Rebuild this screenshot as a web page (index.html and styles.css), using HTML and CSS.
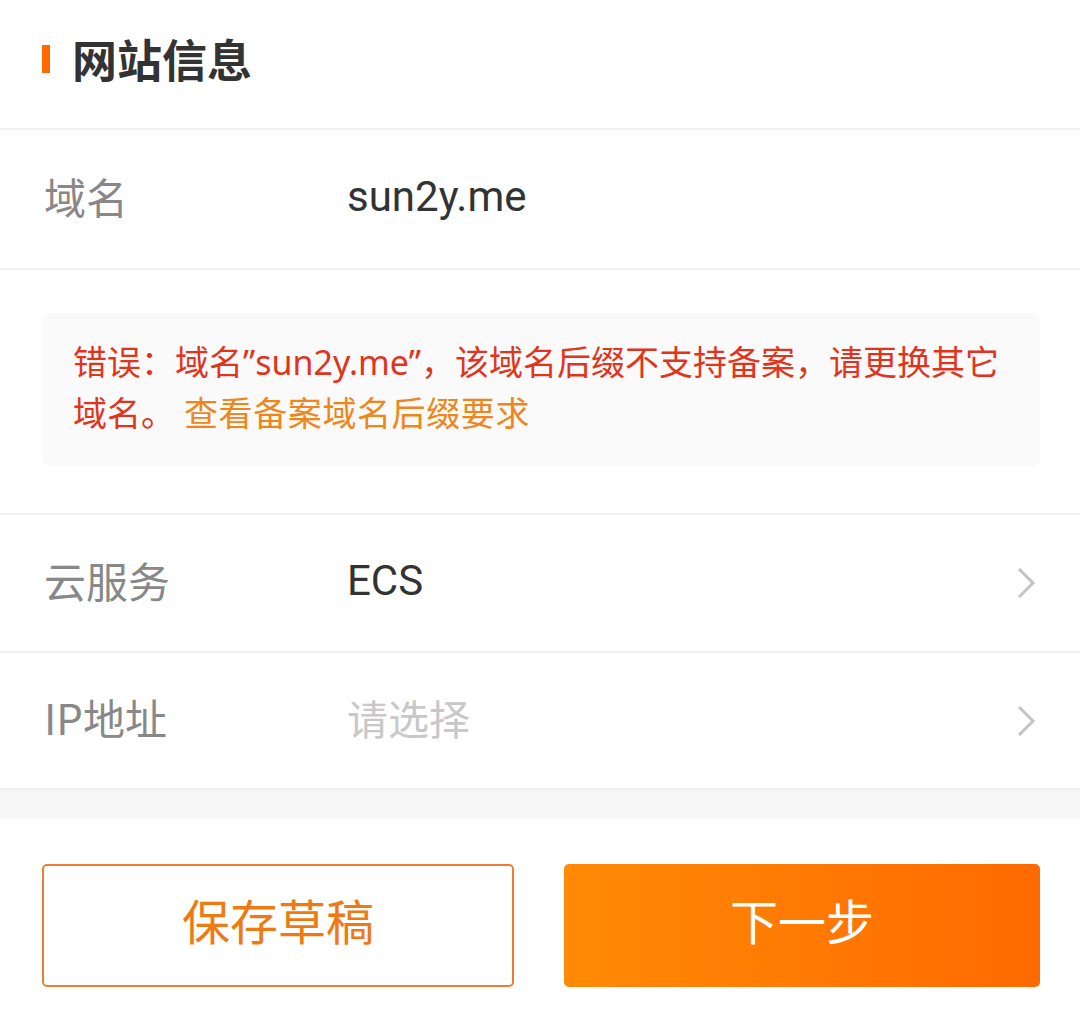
FILE: index.html
```html
<!DOCTYPE html>
<html lang="zh-CN">
<head>
<meta charset="utf-8">
<link rel="stylesheet" href="styles.css">
</head>
<body>
<div class="page">
  <div class="header">
    <span class="bar"></span>
    <h1 class="title">网站信息</h1>
  </div>
  <div class="row row-first">
    <span class="label">域名</span>
    <span class="value">sun2y.me</span>
  </div>
  <div class="error-wrap">
    <div class="error">错误：域名”sun2y.me”，该域名后缀不支持备案，请更换其它域名。<span class="link">查看备案域名后缀要求</span></div>
  </div>
  <div class="row">
    <span class="label">云服务</span>
    <span class="value">ECS</span>
    <svg class="chev" width="24" height="36" viewBox="0 0 24 36"><polyline points="5,3 19,17 5,31" fill="none" stroke="#c4c4c4" stroke-width="3"/></svg>
  </div>
  <div class="row row-last">
    <span class="label">IP地址</span>
    <span class="value placeholder">请选择</span>
    <svg class="chev" width="24" height="36" viewBox="0 0 24 36"><polyline points="5,3 19,17 5,31" fill="none" stroke="#c4c4c4" stroke-width="3"/></svg>
  </div>
  <div class="band"></div>
  <div class="actions">
    <button class="btn btn-outline">保存草稿</button>
    <button class="btn btn-primary">下一步</button>
  </div>
</div>
</body>
</html>
```

FILE: styles.css
```css
html, body {
  margin: 0;
  padding: 0;
  background: #fff;
}
body {
  font-family: "Roboto", "Noto Sans CJK SC", sans-serif;
  color: #333;
}
.page {
  width: 1080px;
}
.header {
  height: 130px;
  display: flex;
  align-items: center;
  padding-left: 42px;
  padding-bottom: 12px;
  box-sizing: border-box;
  border-bottom: 2px solid #f0f0f0;
}
.bar {
  width: 8px;
  height: 28px;
  background: #ff6a00;
  margin-right: 22px;
  margin-top: 2px;
}
.title {
  margin: 0;
  font-family: "Noto Sans CJK SC", sans-serif;
  font-size: 45px;
  font-weight: 700;
  color: #333;
}
.row {
  height: 136px;
  display: flex;
  align-items: center;
  padding: 0 42px 0 44px;
  border-bottom: 2px solid #f0f0f0;
}
.row-first {
  height: 138px;
}
.row-last {
  height: 135px;
}
.label {
  width: 303px;
  font-family: "Noto Sans CJK SC", sans-serif;
  font-size: 42px;
  color: #888;
  margin-top: -8px;
}
.value {
  flex: 1;
  font-family: "Roboto", "Noto Sans CJK SC", sans-serif;
  font-size: 42px;
  color: #333;
  margin-top: -6px;
}
.placeholder {
  font-family: "Noto Sans CJK SC", sans-serif;
  color: #c8c8c8;
  font-size: 41px;
  margin-top: -8px;
}
.chev {
  margin-top: 2px;
}
.error-wrap {
  padding: 43px 40px 46px 42px;
  border-bottom: 2px solid #f0f0f0;
}
.error {
  background: #fafafa;
  border-radius: 8px;
  padding: 24px 30px 28px 31px;
  font-family: "Noto Sans", "Noto Sans CJK SC", sans-serif;
  font-size: 34px;
  line-height: 51px;
  color: #e2341d;
}
.link {
  color: #f08519;
  letter-spacing: 0.6px;
  margin-left: 9px;
}
.band {
  height: 28px;
  background: #f6f6f6;
}
.actions {
  display: flex;
  gap: 50px;
  padding: 46px 40px 0 42px;
}
.btn {
  height: 123px;
  font-family: "Noto Sans CJK SC", sans-serif;
  font-size: 48px;
  border-radius: 5px;
  box-sizing: border-box;
  padding-bottom: 14px;
}
.btn-outline {
  flex: 0 0 472px;
  background: #fff;
  border: 2px solid #ea7f33;
  color: #ef7a12;
}
.btn-primary {
  flex: 1;
  border: none;
  color: #fff;
  background: linear-gradient(90deg, #ff8a06, #ff6a00);
}
```
